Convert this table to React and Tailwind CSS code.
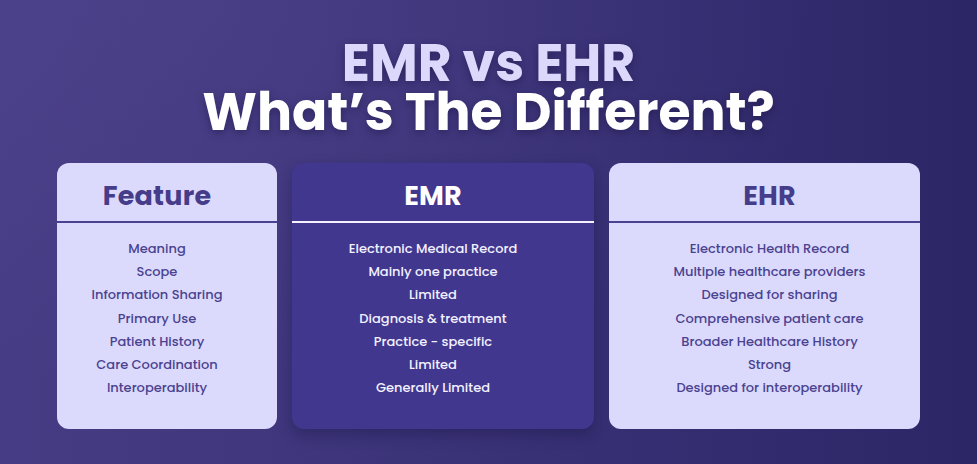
import React from "react";

const features = ["Meaning","Scope","Information Sharing","Primary Use","Patient History","Care Coordination","Interoperability"];
const emr = ["Electronic Medical Record","Mainly one practice","Limited","Diagnosis & treatment","Practice - specific","Limited","Generally Limited"];
const ehr = ["Electronic Health Record","Multiple healthcare providers","Designed for sharing","Comprehensive patient care","Broader Healthcare History","Strong","Designed for interoperability"];

function Card({ title, items, dark, width, shift }) {
  return (
    <div
      className={`${width} h-[266px] rounded-[12px] overflow-hidden flex flex-col ${
        dark ? "bg-[#41378f] text-[#f3f1ff] shadow-[0_6px_14px_rgba(20,16,60,0.35)]" : "bg-[#dcdafc] text-[#4a4291]"
      }`}
    >
      <div className={`h-[60px] flex items-center justify-center border-b-2 ${dark ? "border-[#f4f2ff]" : "border-[#4a4291]"}`}>
        <div className={`text-[27px] font-bold tracking-[0.2px] pt-[9px] ${shift} ${dark ? "text-white" : "text-[#463d8a]"}`}>{title}</div>
      </div>
      <div className={`pt-[14px] flex flex-col items-center ${shift}`}>
        {items.map((t, i) => (
          <div key={i} className="h-[23.2px] leading-[23.2px] text-[13px] font-medium whitespace-nowrap">
            {t}
          </div>
        ))}
      </div>
    </div>
  );
}

export default function App() {
  return (
    <div
      className="w-[977px] h-[464px] overflow-hidden bg-gradient-to-r from-[#463c85] via-[#3a3277] to-[#2c2666] relative"
      style={{ fontFamily: "Poppins, Inter, 'Noto Sans', sans-serif" }}
    >
      <div className="absolute inset-0 bg-[radial-gradient(ellipse_at_20%_0%,rgba(110,95,170,0.18),transparent_60%)] pointer-events-none" />
      <div className="relative flex flex-col items-center pt-[38px]">
        <div className="text-[52px] leading-[49px] font-bold text-[#dcd8fb] drop-shadow-[0_3px_4px_rgba(20,15,60,0.45)]">
          EMR vs EHR
        </div>
        <div className="text-[52px] leading-[49px] font-bold text-white drop-shadow-[0_3px_4px_rgba(20,15,60,0.45)]">
          What’s The Different?
        </div>
      </div>
      <div className="relative flex gap-[15px] pl-[57px] mt-[27px]">
        <Card title="Feature" items={features} width="w-[220px]" shift="pr-[20px]" />
        <Card title="EMR" items={emr} dark width="w-[302px]" shift="pr-[20px]" />
        <Card title="EHR" items={ehr} width="w-[311px]" shift="pl-[10px]" />
      </div>
    </div>
  );
}
